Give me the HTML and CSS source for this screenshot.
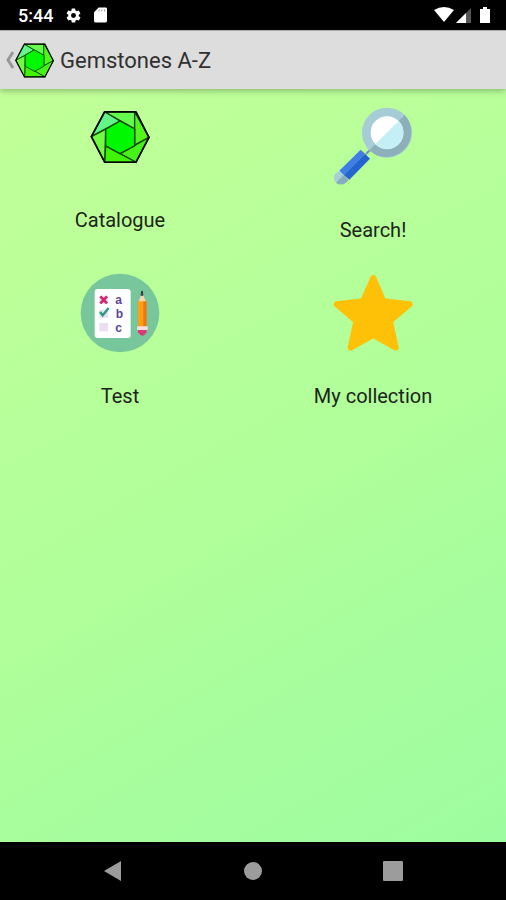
FILE: index.html
```html
<!DOCTYPE html>
<html lang="en">
<head>
<meta charset="utf-8">
<meta name="viewport" content="width=device-width, initial-scale=1">
<title>Gemstones A-Z</title>
<link rel="stylesheet" href="styles.css">
</head>
<body>
<svg class="defs" aria-hidden="true">
  <symbol id="gem" viewBox="0 0 176 156">
    <g stroke="#124a0c" stroke-width="4" stroke-linejoin="round" stroke-linecap="round">
      <path fill="#5cf72a" stroke="none" d="M43 4H135L173 79 135 152H43L4 77Z"/>
      <path fill="#62f588" d="M43 4L88 31 4 77Z"/>
      <path fill="#66fa4e" d="M43 4H131V54Z"/>
      <path fill="#55f51c" d="M131 4L173 79 131 102Z"/>
      <path fill="#46f218" d="M173 79L135 152 88 127Z"/>
      <path fill="#40f408" d="M135 152H43L46 104Z"/>
      <path fill="#72fa45" d="M43 152L46 55 4 77Z"/>
      <path fill="#00f800" d="M88 31L131 54V104L88 127 46 104V55Z"/>
      <path fill="none" stroke="#000" stroke-width="5" d="M43 4H135L173 79 135 152H43L4 77Z"/>
    </g>
  </symbol>
</svg>
<header class="status">
  <span class="clock">5:44</span>
  <svg class="status-icon" viewBox="0 0 24 24" aria-hidden="true"><path d="M19.4 13a7.800 7.800 0 0 0 0-2l2.100-1.600a.5.5 0 0 0 .1-.7l-2-3.400a.5.5 0 0 0-.6-.2l-2.500 1a7.300 7.300 0 0 0-1.700-1l-.4-2.600a.5.5 0 0 0-.5-.5h-4a.5.5 0 0 0-.5.5L9.100 5.100a7.300 7.300 0 0 0-1.700 1L5 5.100a.5.5 0 0 0-.6.2l-2 3.400a.5.5 0 0 0 .1.7L4.600 11a7.800 7.800 0 0 0 0 2l-2.100 1.600a.5.5 0 0 0-.1.7l2 3.400c.1.200.4.300.6.200l2.400-1a7.300 7.300 0 0 0 1.700 1l.4 2.600c0 .3.200.5.500.5h4c.3 0 .5-.2.500-.5l.4-2.600a7.300 7.300 0 0 0 1.700-1l2.500 1c.2.100.5 0 .6-.2l2-3.400a.5.5 0 0 0-.1-.7zM12 15.500a3.500 3.500 0 1 1 0-7 3.500 3.500 0 0 1 0 7z"/></svg>
  <svg class="status-icon card" viewBox="0 0 14 16" aria-hidden="true"><path d="M5 0h7.500Q14 0 14 1.500v13q0 1.500-1.500 1.500h-11Q0 16 0 14.500V5z"/><path fill="#777" d="M5 2h1v2H5zM8 2h1v2H8zM11 2h1v2h-1z"/></svg>
  <svg class="signals" viewBox="0 0 58 18" aria-hidden="true">
    <path d="M0 4Q10-2 20 4L10 16z"/>
    <path fill="#555" d="M22 17L37 2V17z"/><path d="M22 17L32 7V17z"/>
    <path d="M46 3h3V1h4v2h3v14H46z"/>
  </svg>
</header>
<nav class="bar">
  <a class="up" href="#" aria-label="Back">
    <svg class="chevron" viewBox="0 0 8 18" aria-hidden="true"><path d="M7 1L2 9l5 8"/></svg>
    <svg class="logo" aria-hidden="true"><use href="#gem"/></svg>
  </a>
  <h1 class="title">Gemstones A-Z</h1>
</nav>
<main class="menu">
  <a class="item" href="#">
    <svg class="gem" aria-hidden="true"><use href="#gem"/></svg>
    <span>Catalogue</span>
  </a>
  <a class="item" href="#">
    <svg class="picture" viewBox="0 0 240 240" aria-hidden="true">
      <path stroke="#8297a5" stroke-width="7" d="M99 141L114 126"/>
      <path fill="#3f7ee8" d="M83 128L96 140 32 204 19 191z"/>
      <path fill="#2464d0" d="M96 140L111 155 49 218 32 204z"/>
      <path fill="#a8cdd5" d="M19 191L32 204 10 227A19 19 0 0 1 7 200z"/>
      <path fill="#85adbd" d="M32 204L47 219 39 227Q23 238 9 227z"/>
      <circle cx="162" cy="77" r="75" fill="#a6cdd5"/>
      <path fill="#8dafba" d="M215 24A75 75 0 0 1 109 130z"/>
      <circle cx="162" cy="77" r="49" fill="#fff"/>
      <path fill="#c4f0f5" d="M197 42A49 49 0 0 1 127 112z"/>
    </svg>
    <span>Search!</span>
  </a>
  <a class="item" href="#">
    <svg class="picture" viewBox="0 0 240 240" aria-hidden="true">
      <circle cx="120" cy="120" r="118" fill="#78c69b"/>
      <rect x="44" y="48" width="108" height="147" rx="9" fill="#fff"/>
      <path fill="#eadff0" d="M58 68h26v25H58zM58 110h26v24H58zM58 150h26v25H58z"/>
      <path fill="none" stroke="#d6246f" stroke-width="8" d="M61 70L81 91M81 70L61 91"/>
      <path fill="none" stroke="#269c82" stroke-width="7" d="M60 117L68 127 86 105"/>
      <text class="letter" x="116" y="92">a</text>
      <text class="letter" x="118" y="134">b</text>
      <text class="letter" x="116" y="176">c</text>
      <path fill="#f6d7ae" d="M186 59L175 88H199z"/>
      <path fill="#403d48" d="M182 68L183 55Q186 51 189 55L190 68z"/>
      <path fill="#ff9d13" d="M174 85H200V164H174z"/><path fill="#e97817" d="M190 85h10v79H190z"/>
      <path fill="#dd3b78" d="M174 164h26v14q-13 20-26 0z"/>
      <rect x="171" y="160" width="32" height="11" rx="3" fill="#f7dfdf"/>
    </svg>
    <span>Test</span>
  </a>
  <a class="item" href="#">
    <svg class="picture" viewBox="0 0 240 240" aria-hidden="true"><path fill="#ffc107" stroke="#ffc107" stroke-width="18" stroke-linejoin="round" d="M121 15L151 85 230 94 171 144 188 224 121 186 53 224 70 144 11 94 90 85z"/></svg>
    <span>My collection</span>
  </a>
</main>
<footer class="system">
  <button type="button" aria-label="Back"><svg viewBox="0 0 20 20" aria-hidden="true"><path d="M1 10L18 0V20z"/></svg></button>
  <button type="button" aria-label="Home"><svg viewBox="0 0 20 20" aria-hidden="true"><circle cx="10" cy="10" r="9"/></svg></button>
  <button type="button" aria-label="Recent apps"><svg viewBox="0 0 20 20" aria-hidden="true"><rect width="20" height="20" rx="1"/></svg></button>
</footer>
</body>
</html>
```
FILE: styles.css
```css
* { box-sizing: border-box; }

body {
  margin: 0;
  min-height: 100vh;
  display: flex;
  flex-direction: column;
  font-family: Roboto, "Liberation Sans", sans-serif;
  color: #1c241a;
  background: #000;
}

.defs { position: absolute; width: 0; height: 0; }

.status {
  display: flex;
  align-items: center;
  height: 30px;
  padding: 0 14px 0 18px;
  color: #fff;
  background: #000;
}
.status svg { fill: #fff; }
.clock { font-size: 18px; font-weight: 500; margin-right: 12px; }
.status-icon { width: 17px; height: 17px; }
.card { width: 13px; height: 16px; margin-left: 12px; }
.signals { width: 58px; height: 18px; margin-left: auto; }

.bar {
  display: flex;
  align-items: center;
  height: 59px;
  padding: 0 6px;
  background: #ddd;
  border-top: 1px solid #aaa;
  box-shadow: 0 2px 6px rgba(60, 90, 50, 0.4);
  position: relative;
}
.up { display: flex; align-items: center; gap: 1px; }
.chevron {
  width: 8px;
  height: 18px;
  fill: none;
  stroke: #999;
  stroke-width: 3px;
}
.logo { width: 39px; height: 35px; }
.title { margin: 0 0 0 6px; font-size: 22px; font-weight: 400; color: #303030; }

.menu {
  flex: 1;
  display: grid;
  grid-template-columns: 1fr 1fr;
  grid-auto-rows: 142px;
  align-content: start;
  gap: 24px 13px;
  padding: 18px 13px 18px 0;
  background: linear-gradient(150deg, #c2ff98, #b1ff9a 50%, #9dfca0);
}
.item {
  display: flex;
  flex-direction: column;
  align-items: center;
  gap: 31px;
  font-size: 20px;
  line-height: 24px;
  color: inherit;
  text-decoration: none;
}
.picture { width: 80px; height: 80px; }
.gem { width: 60px; height: 54px; margin: 3px 0 13px; }
.letter {
  font: 700 36px "Liberation Sans", sans-serif;
  fill: #5b459c;
  text-anchor: middle;
}

.system {
  display: flex;
  justify-content: center;
  align-items: center;
  gap: 80px;
  height: 58px;
  background: #000;
}
.system button {
  width: 60px;
  height: 48px;
  padding: 0;
  border: 0;
  background: none;
}
.system svg { width: 20px; height: 20px; fill: #9c9c9c; vertical-align: middle; }
```
